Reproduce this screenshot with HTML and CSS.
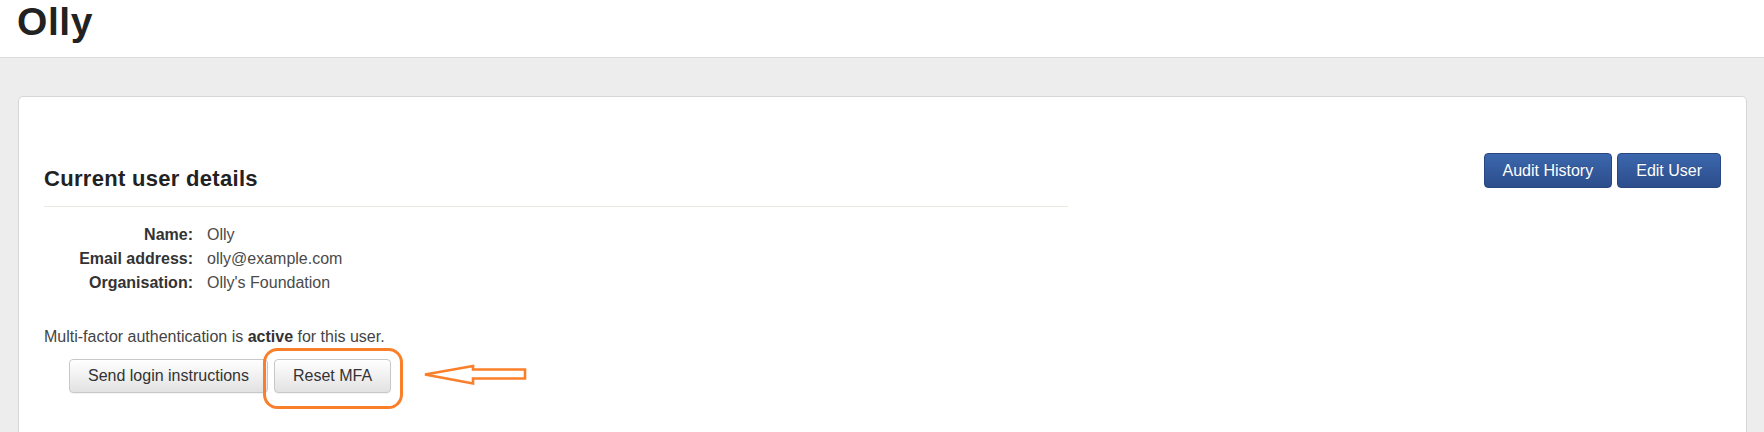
FILE: index.html
```html
<!DOCTYPE html>
<html lang="en">
<head>
<meta charset="utf-8">
<title>Olly</title>
<link rel="stylesheet" href="styles.css">
</head>
<body>
<header class="page-head">
  <h1 class="page-title">Olly</h1>
</header>
<main class="card">
  <div class="card-row">
    <section class="details">
      <h2 class="section-title">Current user details</h2>
      <dl class="info">
        <dt>Name:</dt><dd>Olly</dd>
        <dt>Email address:</dt><dd>olly@example.com</dd>
        <dt>Organisation:</dt><dd>Olly's Foundation</dd>
      </dl>
      <p class="mfa">Multi-factor authentication is <strong>active</strong> for this user.</p>
      <div class="actions">
        <button class="btn btn-default">Send login instructions</button>
        <button class="btn btn-default">Reset MFA</button>
        <svg class="annotation" width="275" height="68" viewBox="0 0 275 68" aria-hidden="true">
          <rect x="5.5" y="3.5" width="137" height="58" rx="13" ry="13" fill="none" stroke="#fa7f2a" stroke-width="3"/>
          <polygon points="166,28.5 214,20 214,23.5 266,23.5 266,32.5 214,32.5 214,37.5" fill="none" stroke="#fa7f2a" stroke-width="2.6" stroke-linejoin="miter"/>
        </svg>
      </div>
    </section>
    <div class="top-actions">
      <button class="btn btn-primary">Audit History</button>
      <button class="btn btn-primary">Edit User</button>
    </div>
  </div>
</main>
</body>
</html>
```

FILE: styles.css
```css
html, body {
  margin: 0;
  padding: 0;
}
body {
  background: #ededed;
  font-family: "Liberation Sans", Arial, sans-serif;
  color: #333;
  font-size: 16px;
  line-height: 24px;
}
.page-head {
  background: #fff;
  height: 57px;
  border-bottom: 1px solid #dcdcdc;
  padding: 0 17px;
}
.page-title {
  margin: 0;
  font-size: 39px;
  letter-spacing: 0.6px;
  line-height: 44px;
  font-weight: bold;
  color: #222;
}
.card {
  margin: 38px 17px 0 18px;
  background: #fff;
  border: 1px solid #d6d6d6;
  border-radius: 5px;
  padding: 56px 25px 60px 25px;
  min-height: 300px;
}
.card-row {
  display: flex;
  justify-content: space-between;
  align-items: flex-start;
}
.details {
  width: 1024px;
}
.section-title {
  margin: 14px 0 0 0;
  font-size: 22px;
  letter-spacing: 0.3px;
  line-height: 24px;
  font-weight: bold;
  color: #222;
  padding-bottom: 15px;
  border-bottom: 1px solid #eae8e1;
}
.info {
  display: grid;
  grid-template-columns: 149px auto;
  column-gap: 14px;
  margin: 16px 0 0 0;
}
.info dt {
  text-align: right;
  font-weight: bold;
  color: #333;
}
.info dd {
  margin: 0;
  color: #4a4a4a;
}
.mfa {
  margin: 30px 0 0 0;
  color: #444;
}
.mfa strong {
  color: #333;
}
.actions {
  position: relative;
  display: flex;
  gap: 6px;
  margin-top: 10px;
  padding-left: 25px;
}
.annotation {
  position: absolute;
  left: 215px;
  top: -13px;
  overflow: visible;
}
.top-actions {
  display: flex;
  gap: 5px;
}
.btn {
  font-family: "Liberation Sans", Arial, sans-serif;
  font-size: 16px;
  border-radius: 4px;
  padding: 6px 18px;
  cursor: pointer;
  margin: 0;
}
.btn-default {
  line-height: 20px;
  color: #333;
  background: linear-gradient(to bottom, #ffffff 0%, #e2e2e2 100%);
  border: 1px solid #c8c8c8;
  box-shadow: inset 0 1px 0 rgba(255,255,255,0.15), 0 1px 1px rgba(0,0,0,0.05);
}
.btn-primary {
  line-height: 21px;
  color: #fff;
  background: linear-gradient(to bottom, #3c67ad 0%, #2c4d8c 100%);
  border: 1px solid #28467f;
  text-shadow: 0 -1px 0 rgba(0,0,0,0.15);
}
```
